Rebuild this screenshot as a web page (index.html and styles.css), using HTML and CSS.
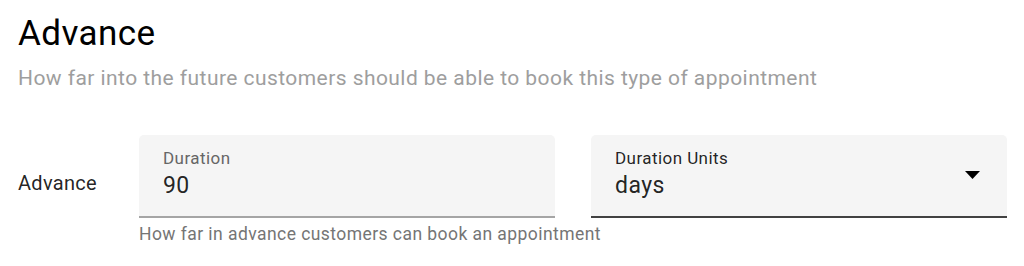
FILE: index.html
```html
<!DOCTYPE html>
<html lang="en">
<head>
<meta charset="utf-8">
<title>Advance</title>
<link rel="stylesheet" href="styles.css">
</head>
<body>
<div class="page">
  <h1 class="title">Advance</h1>
  <p class="subtitle">How far into the future customers should be able to book this type of appointment</p>
  <div class="row">
    <div class="row-label">Advance</div>
    <div class="fields">
      <div class="field-wrap">
        <div class="field">
          <span class="field-label">Duration</span>
          <span class="field-value">90</span>
        </div>
        <div class="hint">How far in advance customers can book an appointment</div>
      </div>
      <div class="field-wrap">
        <div class="field field-select">
          <div class="select-text">
            <span class="field-label field-label-dark">Duration Units</span>
            <span class="field-value">days</span>
          </div>
          <svg class="arrow" width="15" height="8" viewBox="0 0 15 8"><path d="M0 0h15L7.5 8z" fill="#000"/></svg>
        </div>
      </div>
    </div>
  </div>
</div>
</body>
</html>
```

FILE: styles.css
```css
html, body {
  margin: 0;
  padding: 0;
  background: #fff;
}
body {
  font-family: Roboto, "Noto Sans", sans-serif;
  color: rgba(0, 0, 0, 0.87);
  letter-spacing: 0.44px;
}
.page {
  padding: 13px 17px 0 18px;
}
.title {
  margin: 0;
  font-size: 35px;
  line-height: 42px;
  font-weight: 400;
  color: #000;
}
.subtitle {
  margin: 11px 0 0;
  font-size: 21px;
  line-height: 24px;
  color: #9e9e9e;
}
.row {
  display: flex;
  margin-top: 45px;
}
.row-label {
  width: 121px;
  flex: none;
  padding-top: 36px;
  font-size: 20px;
  line-height: 24px;
  letter-spacing: 0.3px;
  color: rgba(0, 0, 0, 0.87);
}
.fields {
  flex: 1;
  display: flex;
  gap: 36px;
}
.field-wrap {
  flex: 1;
  min-width: 0;
}
.field {
  display: flex;
  flex-direction: column;
  gap: 5px;
  background: #f5f5f5;
  border-radius: 5px 5px 0 0;
  padding: 13px 24px 17px;
  border-bottom: 2px solid #a5a5a5;
}
.field-label {
  font-size: 17px;
  line-height: 20px;
  color: #666;
}
.field-label-dark {
  color: rgba(0, 0, 0, 0.87);
}
.field-value {
  font-size: 23px;
  line-height: 26px;
  color: rgba(0, 0, 0, 0.87);
}
.field-select {
  flex-direction: row;
  align-items: center;
  justify-content: space-between;
  border-bottom-color: #424242;
  padding-right: 27px;
}
.select-text {
  display: flex;
  flex-direction: column;
  gap: 5px;
}
.arrow {
  display: block;
  margin-top: 2px;
}
.hint {
  margin-top: 6px;
  font-size: 17.5px;
  line-height: 20px;
  white-space: nowrap;
  color: #757575;
}
```
